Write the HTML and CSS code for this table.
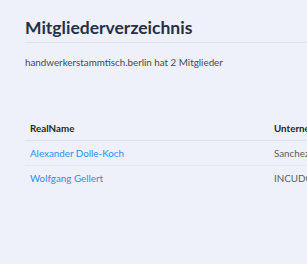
FILE: index.html
```
<!DOCTYPE html>
<html lang="de">

<head>
    <meta charset="UTF-8">
    <meta name="viewport" content="width=device-width, initial-scale=1.0">
    <title>Mitgliederverzeichnis</title>
    <link rel="stylesheet" href="styles.css">
</head>

<body>
    <div class="page">
        <h1 class="title">Mitgliederverzeichnis</h1>
        <p class="count">handwerkerstammtisch.berlin hat 2 Mitglieder</p>
        <div class="table-wrap">
            <table class="members">
                <thead>
                    <tr>
                        <th class="col-name">RealName</th>
                        <th>Unternehmen</th>
                    </tr>
                </thead>
                <tbody>
                    <tr>
                        <td><a href="#">Alexander Dolle-Koch</a></td>
                        <td>Sanchez</td>
                    </tr>
                    <tr>
                        <td><a href="#">Wolfgang Gellert</a></td>
                        <td>INCUDO</td>
                    </tr>
                </tbody>
            </table>
        </div>
    </div>
</body>

</html>
```

FILE: styles.css
```
body {
    margin: 0;
    padding: 0;
    background: rgb(238, 241, 250);
    font-family: "Lato", "Open Sans", sans-serif;
    color: rgb(52, 58, 64);
    overflow: hidden;
}

.page {
    width: 282px;
    padding: 17px 0 0 25px;
}

.title {
    margin: 0;
    padding-bottom: 4px;
    font-size: 17.5px;
    font-weight: 700;
    color: rgb(36, 48, 72);
    border-bottom: 1px solid rgb(222, 226, 234);
}

.count {
    margin: 13px 0 0;
    font-size: 9.8px;
    color: rgb(70, 74, 80);
}

.table-wrap {
    margin-top: 49px;
    overflow: hidden;
}

.members {
    width: 500px;
    border-collapse: collapse;
    font-size: 9.8px;
}

.members th {
    text-align: left;
    font-weight: 700;
    color: rgb(36, 40, 46);
    padding: 5px 5px 6px;
    border-bottom: 1px solid rgb(222, 226, 234);
}

.members .col-name {
    width: 234px;
}

.members td {
    padding: 6px 5px 6px;
    border-bottom: 1px solid rgb(228, 232, 240);
    color: rgb(90, 94, 100);
}

.members tbody tr:last-child td {
    border-bottom: none;
}

.members a {
    color: rgb(52, 140, 240);
    text-decoration: none;
}
```
